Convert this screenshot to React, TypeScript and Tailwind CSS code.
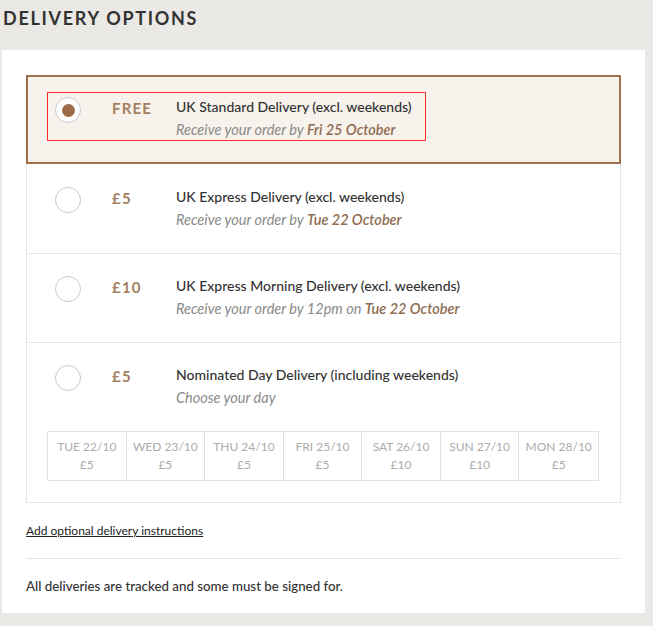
import React from "react";

type Opt = {
  price: string;
  title: string;
  sub: React.ReactNode;
  selected?: boolean;
};

const Radio = ({ on }: { on?: boolean }) => (
  <div className="w-[26px] h-[26px] shrink-0 rounded-full border border-[#c8c8c8] bg-white flex items-center justify-center">
    {on && <div className="w-[13px] h-[13px] rounded-full bg-[#9c6b47]" />}
  </div>
);

const Content = ({ o }: { o: Opt }) => (
  <div className="flex items-start">
    <Radio on={o.selected} />
    <div className="w-[31px] shrink-0" />
    <div className="w-[64px] shrink-0 pt-[1px] text-[15px] leading-[20px] font-bold tracking-[1.2px] text-[#a47f5f]">
      {o.price}
    </div>
    <div className="flex flex-col">
      <div className="text-[14px] leading-[20px] font-medium text-[#333]">{o.title}</div>
      <div className="mt-[3px] text-[14.5px] leading-[20px] italic text-[#8a8a8a]">{o.sub}</div>
    </div>
  </div>
);

const B = ({ children }: { children: React.ReactNode }) => (
  <span className="font-semibold text-[#8f6d52]">{children}</span>
);

const days = [
  ["TUE 22/10", "£5"],
  ["WED 23/10", "£5"],
  ["THU 24/10", "£5"],
  ["FRI 25/10", "£5"],
  ["SAT 26/10", "£10"],
  ["SUN 27/10", "£10"],
  ["MON 28/10", "£5"],
];

export default function App() {
  return (
    <div
      className="w-[653px] h-[626px] bg-[#ebe9e5] overflow-hidden"
      style={{ fontFamily: "Lato, 'Liberation Sans', sans-serif" }}
    >
      <h1 className="pt-[6px] pl-[3px] text-[18px] leading-[24px] font-bold tracking-[1.7px] text-[#333]">
        DELIVERY OPTIONS
      </h1>
      <div className="mt-[20px] ml-[2px] w-[643px] h-[563px] bg-white px-[24px] pt-[25px]">
        <div className="flex flex-col">
          {/* selected */}
          <div className="border-2 border-[#a0714f] bg-[#f7f2ec] pl-[19px] pt-[15px] pb-[21px]">
            <div className="w-[379px] border border-[#ff2a2a] px-[7px] pt-[4px]">
              <Content
                o={{
                  price: "FREE",
                  title: "UK Standard Delivery (excl. weekends)",
                  selected: true,
                  sub: (
                    <>
                      Receive your order by <B>Fri 25 October</B>
                    </>
                  ),
                }}
              />
            </div>
          </div>
          <div className="border-x border-b border-[#e5e5e5] pl-[28px] pt-[23px] pb-[23px]">
            <Content
              o={{
                price: "£5",
                title: "UK Express Delivery (excl. weekends)",
                sub: (
                  <>
                    Receive your order by <B>Tue 22 October</B>
                  </>
                ),
              }}
            />
          </div>
          <div className="border-x border-b border-[#e5e5e5] pl-[28px] pt-[22px] pb-[23px]">
            <Content
              o={{
                price: "£10",
                title: "UK Express Morning Delivery (excl. weekends)",
                sub: (
                  <>
                    Receive your order by 12pm on <B>Tue 22 October</B>
                  </>
                ),
              }}
            />
          </div>
          <div className="border-x border-b border-[#e5e5e5] pt-[22px] pb-[21px]">
            <div className="pl-[28px]">
              <Content
                o={{
                  price: "£5",
                  title: "Nominated Day Delivery (including weekends)",
                  sub: <>Choose your day</>,
                }}
              />
            </div>
            <div className="mt-[23px] ml-[20px] w-[552px] grid grid-cols-7 border border-[#e3e3e3]">
              {days.map(([d, p], i) => (
                <div
                  key={d}
                  className={`flex flex-col items-center py-[6px] text-[12px] leading-[18px] text-[#acacac] ${
                    i < 6 ? "border-r border-[#e3e3e3]" : ""
                  }`}
                >
                  <span>{d}</span>
                  <span>{p}</span>
                </div>
              ))}
            </div>
          </div>
        </div>
        <div className="pt-[14px] pb-[17px]">
          <a className="text-[12px] leading-[20px] text-[#222] underline" href="#">
            Add optional delivery instructions
          </a>
        </div>
        <div className="border-t border-[#e5e5e5]" />
        <p className="pt-[17px] text-[13.3px] leading-[20px] font-medium text-[#333]">
          All deliveries are tracked and some must be signed for.
        </p>
      </div>
    </div>
  );
}
